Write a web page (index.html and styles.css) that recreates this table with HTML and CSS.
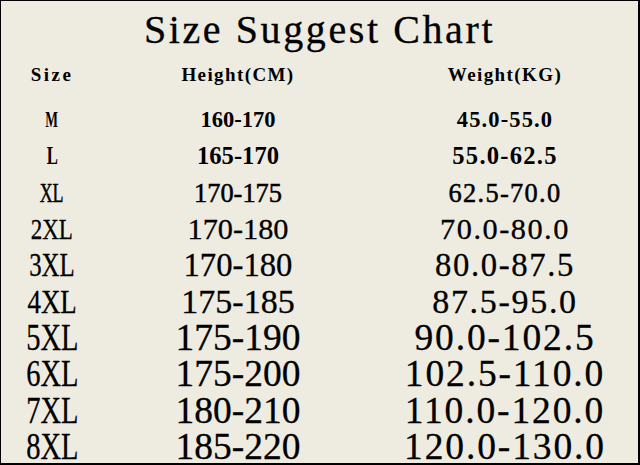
FILE: index.html
```html
<!DOCTYPE html>
<html lang="en">
<head>
<meta charset="utf-8">
<title>Size Suggest Chart</title>
<link rel="stylesheet" href="styles.css">
</head>
<body>
<div class="chart">
  <h1 class="title">Size Suggest Chart</h1>
  <div class="table">
    <div class="row head"><span class="c"><span class="hsize">Size</span></span><span class="c">Height(CM)</span><span class="c">Weight(KG)</span></div>
    <div class="row r1"><span class="c"><span class="sz">M</span></span><span class="c">160-170</span><span class="c w">45.0-55.0</span></div>
    <div class="row r2"><span class="c"><span class="sz">L</span></span><span class="c">165-170</span><span class="c w">55.0-62.5</span></div>
    <div class="row r3"><span class="c"><span class="sz">XL</span></span><span class="c">170-175</span><span class="c w">62.5-70.0</span></div>
    <div class="row r4"><span class="c"><span class="sz">2XL</span></span><span class="c">170-180</span><span class="c w">70.0-80.0</span></div>
    <div class="row r5"><span class="c"><span class="sz">3XL</span></span><span class="c">170-180</span><span class="c w">80.0-87.5</span></div>
    <div class="row r6"><span class="c"><span class="sz">4XL</span></span><span class="c">175-185</span><span class="c w">87.5-95.0</span></div>
    <div class="row r7"><span class="c"><span class="sz">5XL</span></span><span class="c">175-190</span><span class="c w">90.0-102.5</span></div>
    <div class="row r7"><span class="c"><span class="sz">6XL</span></span><span class="c">175-200</span><span class="c w">102.5-110.0</span></div>
    <div class="row r7"><span class="c"><span class="sz">7XL</span></span><span class="c">180-210</span><span class="c w">110.0-120.0</span></div>
    <div class="row r7"><span class="c"><span class="sz">8XL</span></span><span class="c">185-220</span><span class="c w">120.0-130.0</span></div>
  </div>
</div>
</body>
</html>
```

FILE: styles.css
```css
* { box-sizing: border-box; }
html, body { margin: 0; padding: 0; background: #eeebe1; }
.chart {
  width: 640px;
  height: 465px;
  background: #eeebe1;
  border-style: solid;
  border-color: #000;
  border-width: 1px 2px 2px 1px;
  overflow: hidden;
  font-family: "Liberation Serif", "Times New Roman", serif;
  color: #000;
}
.title {
  margin: 9px 0 7px;
  font-size: 40px;
  line-height: 40px;
  font-weight: normal;
  text-align: center;
  letter-spacing: 2.6px;
  -webkit-text-stroke: 0.3px #000;
}
.row {
  display: grid;
  grid-template-columns: 102px 270px 264px;
  height: 36.33px;
  align-items: center;
  line-height: 34px;
  white-space: nowrap;
  -webkit-text-stroke: 0.3px #000;
}
.c { text-align: center; }
.w { letter-spacing: 0.05em; }
.sz { display: inline-block; transform: scaleX(0.76); }
.head {
  height: 36px;
  margin-bottom: 9px;
  font-size: 19px;
  font-weight: bold;
  letter-spacing: 1.4px;
  -webkit-text-stroke: 0;
}
.head .c { letter-spacing: 1.4px; }
.hsize { letter-spacing: 2.5px; }
.r1 { font-size: 22.5px; font-weight: bold; -webkit-text-stroke: 0; }
.r1 .sz { transform: scaleX(0.6); }
.r2 { font-size: 24.6px; font-weight: bold; -webkit-text-stroke: 0; }
.r2 .sz { transform: scaleX(0.68); }
.r3 { font-size: 26.4px; -webkit-text-stroke: 0.5px #000; }
.r3 .sz { transform: scaleX(0.68); }
.r4 { font-size: 30.3px; }
.r5 { font-size: 32.7px; }
.r6 { font-size: 34px; }
.r6 .sz { transform: scaleX(0.79); }
.r7 { font-size: 37.5px; }
```
